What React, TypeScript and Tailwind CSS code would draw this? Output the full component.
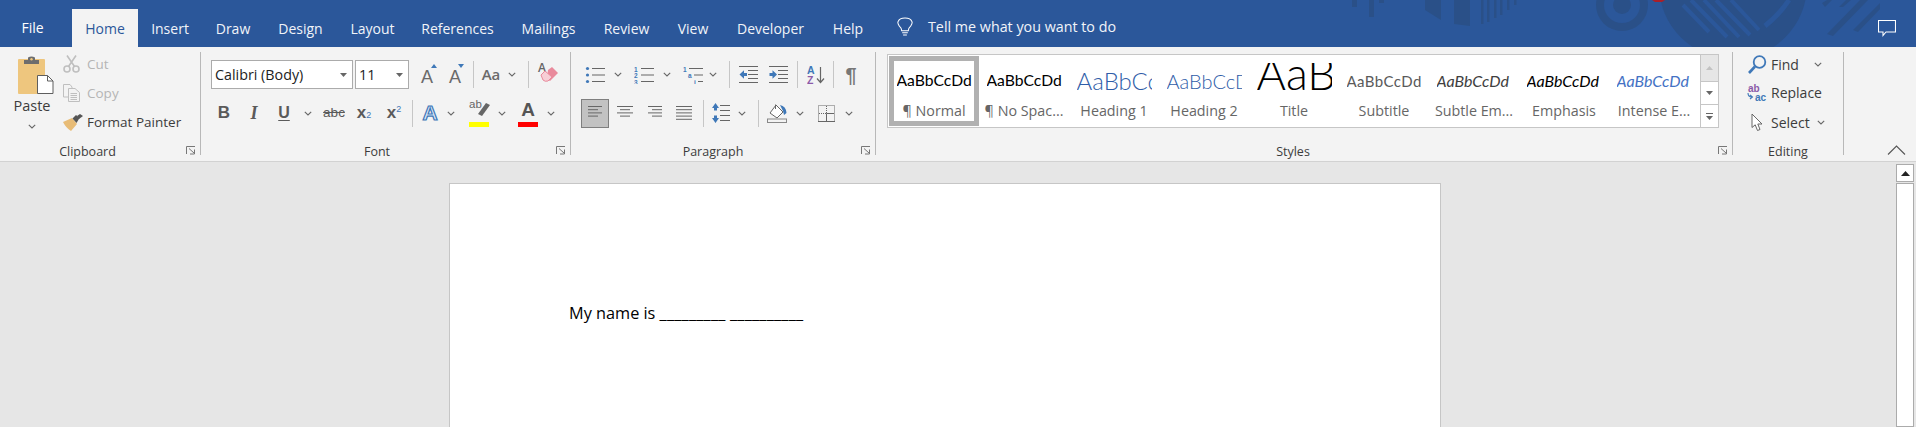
import type { ReactNode } from 'react';

const tabs = [
  { label: 'Insert', w: 'w-[64px]' },
  { label: 'Draw', w: 'w-[62px]' },
  { label: 'Design', w: 'w-[73px]' },
  { label: 'Layout', w: 'w-[71px]' },
  { label: 'References', w: 'w-[99px]' },
  { label: 'Mailings', w: 'w-[83px]' },
  { label: 'Review', w: 'w-[73px]' },
  { label: 'View', w: 'w-[60px]' },
  { label: 'Developer', w: 'w-[95px]' },
  { label: 'Help', w: 'w-[60px]' },
];

const galleryStyles = [
  { label: '¶ Normal', text: 'AaBbCcDd', cls: 'text-[15.7px] text-black', selected: true },
  { label: '¶ No Spac...', text: 'AaBbCcDd', cls: 'text-[15.7px] text-black' },
  { label: 'Heading 1', text: 'AaBbCcDd', cls: 'text-[24px] font-light text-[#2f5da8]' },
  { label: 'Heading 2', text: 'AaBbCcDd', cls: 'text-[20px] font-light text-[#2f5da8]' },
  { label: 'Title', text: 'AaB', cls: 'text-[45px] font-light text-black leading-[36px] -translate-y-[8px]' },
  { label: 'Subtitle', text: 'AaBbCcDd', cls: 'text-[15px] text-[#5a5a5a] tracking-[0.4px]' },
  { label: 'Subtle Em...', text: 'AaBbCcDd', cls: 'text-[16px] italic text-[#404040]' },
  { label: 'Emphasis', text: 'AaBbCcDd', cls: 'text-[16px] italic text-black' },
  { label: 'Intense E...', text: 'AaBbCcDd', cls: 'text-[16px] italic text-[#4472c4]' },
];

function Slot({ className, children }: { className: string; children?: ReactNode }) {
  return <div className={'flex items-center justify-center shrink-0 ' + className}>{children}</div>;
}

function Chev({ className = '' }: { className?: string }) {
  return (
    <Slot className={'w-[8px] ' + className}>
      <svg width="8" height="5" viewBox="0 0 8 5" fill="none" stroke="#666" strokeWidth="1.1">
        <path d="M0.8 0.8 4 4 7.2 0.8" />
      </svg>
    </Slot>
  );
}

function Launcher() {
  return (
    <svg width="10" height="9" viewBox="0 0 10 9" fill="none" stroke="#777" strokeWidth="1" className="absolute right-[4px] top-[2px]">
      <path d="M0.5 8V0.5H9" />
      <path d="M3 2.5 8 7M8.5 3.5V8H4" />
    </svg>
  );
}

function Group({ label, launcher, labelClass = '', className, children }: { label: string; launcher?: boolean; labelClass?: string; className: string; children: ReactNode }) {
  return (
    <div className={'flex flex-col shrink-0 h-[103px] border-r border-[#b8b8b8] ' + className}>
      {children}
      <div className="relative mt-auto -mb-[5px] h-[16px] flex justify-center">
        <span className={'text-[12.5px] leading-[16px] text-[#3c3c3c] ' + labelClass}>{label}</span>
        {launcher && <Launcher />}
      </div>
    </div>
  );
}

function Sep({ className }: { className: string }) {
  return <div className={'w-px h-[27px] bg-[#c6c6c6] shrink-0 ' + className} />;
}

function Lines({ rows }: { rows: [number, number][] }) {
  return (
    <svg width="18" height="16" viewBox="0 0 18 16" stroke="#666" strokeWidth="1">
      {rows.map(([a, b], i) => (
        <line key={i} x1={a} x2={b} y1={1.5 + i * 3.2} y2={1.5 + i * 3.2} />
      ))}
    </svg>
  );
}

function ListIcon({ marks, starts = [7, 7, 7] }: { marks: { t: string; x: number }[]; starts?: number[] }) {
  return (
    <svg width="20" height="18" viewBox="0 0 20 18" fill="#3f78b8" stroke="none">
      {marks.map((m, i) =>
        m.t === '•' ? (
          <circle key={i} cx="2.5" cy={2.5 + i * 6.5} r="1.6" />
        ) : (
          <text key={i} x={m.x} y={6 + i * 6.3} fontSize="6.5" fontWeight="700" fontFamily="Liberation Sans, sans-serif">{m.t}</text>
        ),
      )}
      {starts.map((s, i) => (
        <rect key={i} x={s} y={2 + i * 6.5} width={20 - s} height="1" fill="#666" />
      ))}
    </svg>
  );
}

function IndentIcon({ dir }: { dir: 'in' | 'out' }) {
  return (
    <svg width="19" height="17" viewBox="0 0 19 17">
      <g fill="#666">
        <rect y="0" width="19" height="1" />
        <rect x="9" y="4" width="10" height="1" />
        <rect x="9" y="8" width="10" height="1" />
        <rect x="9" y="12" width="10" height="1" />
        <rect y="16" width="19" height="1" />
      </g>
      {dir === 'out' ? (
        <path d="M0.5 8.5 5 4.2V7H8V10H5V12.8Z" fill="#3f78b8" />
      ) : (
        <path d="M8 8.5 3.5 4.2V7H0.5V10H3.5V12.8Z" fill="#3f78b8" />
      )}
    </svg>
  );
}

function PasteIcon() {
  return (
    <svg width="36" height="38" viewBox="0 0 36 38">
      <rect x="0" y="3" width="27" height="35" fill="#eec67e" rx="1" />
      <path d="M6 8V4H10V1.5Q13.5-.5 17 1.5V4H21V8Z" fill="#6d6d6d" />
      <circle cx="13.5" cy="3.2" r="1.2" fill="#eec67e" />
      <path d="M19.5 19.5H29.5L35 25V37.5H19.5Z" fill="#fff" stroke="#5e5e5e" />
      <path d="M29.5 19.5V25H35" fill="none" stroke="#5e5e5e" />
    </svg>
  );
}

function ScissorsIcon() {
  return (
    <svg width="17" height="18" viewBox="0 0 17 18" fill="none" stroke="#bfbfbf" strokeWidth="1.6">
      <circle cx="4" cy="14" r="3" />
      <circle cx="13" cy="14" r="3" />
      <path d="M5.5 11.5 13 .5M11.5 11.5 4 .5" />
    </svg>
  );
}

function CopyIcon() {
  return (
    <svg width="17" height="18" viewBox="0 0 17 18" fill="#f3f3f3" stroke="#bfbfbf">
      <path d="M.5.5H7L9 3V13H.5Z" />
      <path d="M5.5 4.5H12L16.5 8.5V17.5H5.5Z" />
      <path d="M7.5 9.5H14M7.5 11.5H14M7.5 13.5H14M7.5 15.5H14" />
    </svg>
  );
}

function BrushIcon() {
  return (
    <svg width="20" height="17" viewBox="0 0 20 17">
      <path d="M0 8 9 4 14 10 8 17Q3 14 0 8Z" fill="#e8bc76" />
      <path d="M9.5 4.5 13 1 16.5 4 13.5 9Z" fill="#555" />
      <path d="M14 2 17 0 20 2 16 5Z" fill="#555" />
    </svg>
  );
}

function GrowA({ up }: { up: boolean }) {
  return (
    <div className="relative flex h-[24px] w-[22px] items-end justify-center">
      <span className="text-[18px] leading-[20px] text-[#6a6a6a] font-['Liberation_Sans',sans-serif]">A</span>
      <svg width="6" height="4" viewBox="0 0 6 4" className="absolute right-[1px] top-[1px]" fill="#3f78b8">
        <path d={up ? 'M0 4 3 0 6 4Z' : 'M0 0H6L3 4Z'} />
      </svg>
    </div>
  );
}

function Eraser() {
  return (
    <div className="relative h-[24px] w-[20px]">
      <span className="absolute left-[0px] top-[-2px] text-[12px] font-semibold leading-[14px] text-[#666]">A</span>
      <svg width="20" height="20" viewBox="0 0 20 20" className="absolute left-0 top-[4px]">
        <path d="M10 3 14 0 20 6 12 14 9 12Z" fill="#e98a9c" />
        <path d="M3 8 7 4 14 10 10 14Q7 15 5 13Z" fill="#f7cfd6" stroke="#e98a9c" />
      </svg>
    </div>
  );
}

function Highlighter() {
  return (
    <div className="relative h-[26px] w-[20px]">
      <span className="absolute left-0 top-[-3px] text-[11.5px] leading-[14px] text-[#666]">ab</span>
      <svg width="12" height="15" viewBox="0 0 12 15" className="absolute right-[-1px] top-[2px]" fill="#666">
        <path d="M0 12 8 1 12 3 4 14Z" />
      </svg>
      <div className="absolute bottom-[-1px] left-0 h-[5px] w-[20px] bg-[#ffff00]" />
    </div>
  );
}

function FontColor() {
  return (
    <div className="relative flex h-[26px] w-[20px] justify-center">
      <span className="text-[19px] font-semibold leading-[20px] text-[#555] font-['Liberation_Sans',sans-serif]">A</span>
      <div className="absolute bottom-[-1px] left-0 h-[5px] w-[20px] bg-[#ff0000]" />
    </div>
  );
}

function LineSpacing() {
  return (
    <svg width="18" height="20" viewBox="0 0 18 20">
      <path d="M3.5 0 7 5H5V7.5H2V5H0Z" fill="#3f78b8" />
      <path d="M3.5 20 7 15H5V12.5H2V15H0Z" fill="#3f78b8" />
      <g fill="#666">
        <rect x="8" y="2" width="10" height="1" />
        <rect x="8" y="7" width="10" height="1" />
        <rect x="8" y="12" width="10" height="1" />
        <rect x="8" y="17" width="10" height="1" />
      </g>
    </svg>
  );
}

function Shading() {
  return (
    <svg width="21" height="19" viewBox="0 0 21 19" fill="none">
      <path d="M9 1 16 8 10 14 3 9Z" stroke="#666" fill="#fff" />
      <path d="M8.5 0.5V5" stroke="#666" />
      <path d="M13 1Q19 2 19.5 9L17 11 16 7Z" fill="#3f78b8" />
      <rect x=".5" y="15" width="19" height="3.5" stroke="#888" fill="#f3f3f3" />
    </svg>
  );
}

function Borders() {
  return (
    <svg width="17" height="17" viewBox="0 0 17 17" fill="none" stroke="#666">
      <rect x=".5" y=".5" width="16" height="16" strokeDasharray="1 1" />
      <path d="M8.5 1V16M1 8.5H16" strokeDasharray="1 1" />
      <path d="M0 16.5H17M8.5 8.5V16M8.5 8.500H16" />
    </svg>
  );
}

function SortIcon() {
  return (
    <svg width="18" height="19" viewBox="0 0 18 19" fontFamily="Liberation Sans, sans-serif" fontWeight="700" fontSize="10.5">
      <text x="0" y="9" fill="#3f78b8">A</text>
      <text x="0" y="19" fill="#8b5aa8">Z</text>
      <path d="M13.5 2V17M10 13.5 13.5 17.5 17 13.5" fill="none" stroke="#666" strokeWidth="1.2" />
    </svg>
  );
}

function BoxArrow() {
  return (
    <svg width="7" height="4" viewBox="0 0 7 4" fill="#666">
      <path d="M0 0H7L3.5 4Z" />
    </svg>
  );
}

function Banner() {
  return (
    <svg viewBox="0 0 1916 47" width="1916" height="47" className="absolute left-0 top-0">
      <g fill="#2a5088">
        <rect x="1352" width="5" height="7" />
        <rect x="1369" width="5" height="17" />
        <rect x="1379" width="5" height="3" />
        <path d="M1425 0H1441V20L1425 10Z" />
        <path d="M1454 0H1470V26L1454 24Z" />
        <rect x="1481" width="2.5" height="24" />
        <rect x="1487" width="2.5" height="22" />
        <rect x="1494" width="2.5" height="18" />
        <rect x="1500" width="2.5" height="15" />
        <rect x="1507" width="2.5" height="10" />
        <rect x="1514" width="2.5" height="5" />
        <circle cx="1622" cy="5" r="26" />
        <circle cx="1733" cy="-15" r="74" />
        <path d="M1822 3 1827 0H1832L1825 7ZM1839 7 1846 0H1851L1843 7ZM1827 34 1860 0H1868L1833 36ZM1853 30 1880 3V9L1858 32Z" />
      </g>
      <g fill="#2b579a">
        <circle cx="1622" cy="5" r="18" />
      </g>
      <circle cx="1622" cy="5" r="9" fill="#2a5088" />
      <g stroke="#2b579a" strokeWidth="4" fill="none">
        <path d="M1683 5 1709 32M1691 0 1727 37M1704 0 1739 37M1716 0 1750 35M1731 0 1759 30" />
        <path d="M1765 26Q1780 14 1789 0" strokeWidth="5" />
      </g>
      <path d="M1652 0H1665L1662 2H1655Z" fill="#a8202a" />
    </svg>
  );
}

export default function App() {
  return (
    <div className="flex h-[427px] w-[1916px] flex-col overflow-hidden bg-[#e6e6e6] font-['Open_Sans',sans-serif] text-[13.5px] text-[#3c3c3c]">
      {/* tab strip */}
      <header className="relative h-[47px] shrink-0 bg-[#2b579a] text-[14px]">
        <Banner />
        <div className="relative flex h-full items-end">
          <Slot className="mr-[7px] h-[38px] w-[65px] pb-[2px] text-white">File</Slot>
          <Slot className="h-[38px] w-[66px] bg-[#f3f3f3] text-[#2b579a]">Home</Slot>
          {tabs.map((t) => (
            <Slot key={t.label} className={'h-[38px] text-[#f1f4f9] ' + t.w}>{t.label}</Slot>
          ))}
          <Slot className="ml-[19px] h-[38px] w-[16px] pb-[2px]">
            <svg width="17" height="20" viewBox="0 0 17 20" fill="none" stroke="#fff" strokeWidth="1.1">
              <path d="M5 14Q5 11 2.500 9Q.5 6.500 1 4.500Q2.500.5 8.500.5Q14.500.5 16 4.500Q16.500 6.500 14.500 9Q12 11 12 14Z" />
              <path d="M5.500 16H11.500M6.500 18.500H10.500" />
            </svg>
          </Slot>
          <Slot className="ml-[15px] h-[38px] pb-[2px] text-[14.3px] text-[#f1f4f9]">Tell me what you want to do</Slot>
          <svg width="18" height="17" viewBox="0 0 18 17" fill="none" stroke="#fff" strokeWidth="1.1" className="absolute right-[20px] top-[20px]">
            <path d="M.5.5H17.500V12H8L5 15.500V12H.5Z" />
          </svg>
        </div>
      </header>

      {/* ribbon */}
      <section className="flex h-[115px] shrink-0 items-start border-b border-[#d2d2d2] bg-[#f3f3f3] pt-[5px]">
        <Group label="Clipboard" launcher className="w-[201px]" labelClass="mr-[25px]">
          <div className="flex">
            <div className="ml-[15px] flex w-[34px] flex-col items-center">
              <div className="mt-[4px] h-[38px] w-[36px] shrink-0 translate-x-[4px]"><PasteIcon /></div>
              <div className="mt-[3px] text-[14.5px] leading-[18px]">Paste</div>
              <Chev className="mt-[8px] h-[6px]" />
            </div>
            <div className="ml-[14px] flex flex-col">
              <div className="mt-[3px] flex h-[18px] items-center gap-[6px]"><ScissorsIcon /><span className="ml-[1px] text-[#b5b5b5]">Cut</span></div>
              <div className="mt-[11px] flex h-[18px] items-center gap-[6px]"><CopyIcon /><span className="ml-[1px] text-[#b5b5b5]">Copy</span></div>
              <div className="mt-[11px] flex h-[18px] items-center gap-[4px]"><BrushIcon /><span>Format Painter</span></div>
            </div>
          </div>
        </Group>

        <Group label="Font" launcher className="w-[370px] pl-[9px]" labelClass="mr-[26px]">
          <div className="mt-[8px] ml-[1px] flex h-[29px] items-center">
            <div className="flex h-[29px] w-[142px] shrink-0 items-center justify-between border border-[#ababab] bg-white pl-[3px] pr-[5px] text-[14.3px] text-[#222]">
              Calibri (Body)<BoxArrow />
            </div>
            <div className="ml-[2px] flex h-[29px] w-[54px] shrink-0 items-center justify-between border border-[#ababab] bg-white pl-[3px] pr-[5px] text-[14.3px] text-[#222]">
              11<BoxArrow />
            </div>
            <Slot className="w-[36px]"><GrowA up /></Slot>
            <Slot className="w-[20px]"><GrowA up={false} /></Slot>
            <Sep className="ml-[8px]" />
            <Slot className="w-[34px] text-[15px] font-semibold text-[#6a6a6a]">Aa</Slot>
            <Chev />
            <Sep className="ml-[12px]" />
            <Slot className="w-[38px]"><Eraser /></Slot>
          </div>
          <div className="mt-[9px] flex h-[30px] items-center font-['Liberation_Sans',sans-serif] text-[#5a5a5a]">
            <Slot className="w-[28px] text-[17px] font-bold">B</Slot>
            <Slot className="w-[32px] font-['Liberation_Serif',serif] text-[18px] font-bold italic">I</Slot>
            <Slot className="w-[28px] text-[16px] font-bold underline underline-offset-2">U</Slot>
            <Chev className="ml-[6px]" />
            <Slot className="ml-[5px] w-[34px] text-[13.5px] line-through">abc</Slot>
            <Slot className="w-[26px] text-[17px] font-bold">x<sub className="text-[9px] font-normal text-[#3f78b8]">2</sub></Slot>
            <Slot className="w-[34px] text-[17px] font-bold">x<sup className="text-[9px] font-normal text-[#3f78b8]">2</sup></Slot>
            <Sep className="ml-[1px]" />
            <Slot className="w-[34px] text-[21px] font-bold text-[#dce8f7] [-webkit-text-stroke:1.2px_#3f78b8]">A</Slot>
            <Chev />
            <Slot className="ml-[5px] w-[38px]"><Highlighter /></Slot>
            <Chev />
            <Slot className="ml-[4px] w-[36px]"><FontColor /></Slot>
            <Chev className="ml-[1px]" />
          </div>
        </Group>

        <Group label="Paragraph" launcher className="w-[305px] pl-[10px]" labelClass="mr-[30px]">
          <div className="mt-[8px] flex h-[29px] items-center">
            <Slot className="w-[28px]"><ListIcon marks={[{ t: '•', x: 0 }, { t: '•', x: 0 }, { t: '•', x: 0 }]} /></Slot>
            <Chev className="ml-[5px]" />
            <Slot className="ml-[8px] w-[28px]"><ListIcon marks={[{ t: '1', x: 0 }, { t: '2', x: 0 }, { t: '3', x: 0 }]} /></Slot>
            <Chev className="ml-[5px]" />
            <Slot className="ml-[8px] w-[28px]"><ListIcon marks={[{ t: '1', x: 0 }, { t: 'a', x: 5 }, { t: 'i', x: 11 }]} starts={[6, 11, 15]} /></Slot>
            <Chev className="ml-[2px]" />
            <Sep className="ml-[12px]" />
            <Slot className="ml-[2px] w-[32px]"><IndentIcon dir="out" /></Slot>
            <Slot className="w-[28px]"><IndentIcon dir="in" /></Slot>
            <Sep className="ml-[5px]" />
            <Slot className="w-[35px]"><SortIcon /></Slot>
            <Sep className="" />
            <Slot className="w-[34px] font-['Liberation_Sans',sans-serif] text-[20px] font-bold text-[#777]">¶</Slot>
          </div>
          <div className="mt-[9px] flex h-[30px] items-center">
            <Slot className="h-[29px] w-[28px] border border-[#7f7f7f] bg-[#c2c2c2]"><Lines rows={[[2, 16], [2, 12], [2, 16], [2, 12]]} /></Slot>
            <Slot className="ml-[2px] w-[28px]"><Lines rows={[[1, 17], [4, 14], [1, 17], [4, 14]]} /></Slot>
            <Slot className="ml-[2px] w-[28px]"><Lines rows={[[2, 16], [6, 16], [2, 16], [6, 16]]} /></Slot>
            <Slot className="ml-[2px] w-[28px]"><Lines rows={[[0, 16], [0, 16], [0, 16], [0, 16], [0, 16]]} /></Slot>
            <Sep className="ml-[4px]" />
            <Slot className="w-[34px]"><LineSpacing /></Slot>
            <Chev />
            <Sep className="ml-[12px]" />
            <Slot className="w-[36px]"><Shading /></Slot>
            <Chev className="ml-[1px]" />
            <Slot className="ml-[6px] w-[32px]"><Borders /></Slot>
            <Chev className="ml-[3px]" />
          </div>
        </Group>

        <Group label="Styles" launcher className="w-[857px] pl-[11px]" labelClass="mr-[33px]">
          <div className="mt-[2px] flex h-[74px] w-[832px] border border-[#c6c6c6] bg-white pl-px">
            {galleryStyles.map((s) => (
              <div key={s.label} className={'mt-px flex h-[70px] w-[90px] shrink-0 flex-col items-center border-[5px] ' + (s.selected ? 'border-[#b1b1b1]' : 'border-transparent')}>
                <div className="mt-[2px] flex h-[36px] w-[75px] items-center overflow-hidden whitespace-nowrap font-['Lato',sans-serif]">
                  <span className={s.cls}>{s.text}</span>
                </div>
                <div className="mt-[3px] whitespace-nowrap text-[14.3px] leading-[18px] text-[#666]">{s.label}</div>
              </div>
            ))}
            <div className="ml-px flex w-[18px] shrink-0 flex-col border-l border-[#c6c6c6]">
              <Slot className="h-[26px] bg-[#e6e6e6]">
                <svg width="7" height="4" viewBox="0 0 7 4" fill="#c2c2c2"><path d="M0 4H7L3.5 0Z" /></svg>
              </Slot>
              <Slot className="h-[24px] border-y border-[#c6c6c6]"><BoxArrow /></Slot>
              <Slot className="flex-1 flex-col gap-[2px]">
                <div className="h-px w-[7px] bg-[#666]" />
                <BoxArrow />
              </Slot>
            </div>
          </div>
        </Group>

        <Group label="Editing" className="w-[111px]" labelClass="">
          <div className="ml-[14px] flex flex-col text-[14px]">
            <div className="mt-[2px] flex h-[20px] items-center">
              <Slot className="w-[20px]">
                <svg width="19" height="19" viewBox="0 0 19 19" fill="none" stroke="#3f78b8" strokeWidth="1.8">
                  <circle cx="11.500" cy="7" r="5.800" />
                  <path d="M7 11.500 1 18" strokeWidth="2.600" />
                </svg>
              </Slot>
              <span className="ml-[4px]">Find</span>
              <Chev className="ml-[15px]" />
            </div>
            <div className="mt-[8px] flex h-[20px] items-center">
              <Slot className="w-[20px]">
                <svg width="20" height="18" viewBox="0 0 20 18" fontFamily="Liberation Sans, sans-serif" fontWeight="700" fontSize="10">
                  <text x="1" y="8.500" fill="#8b5aa8">ab</text>
                  <text x="8" y="17.500" fill="#3f78b8">ac</text>
                  <path d="M1 10Q1 14 5 14M3 11.800 5.500 14 3 16" fill="none" stroke="#3f78b8" strokeWidth="1.100" />
                </svg>
              </Slot>
              <span className="ml-[4px]">Replace</span>
            </div>
            <div className="mt-[10px] flex h-[20px] items-center">
              <Slot className="w-[20px]">
                <svg width="12" height="19" viewBox="0 0 12 19" fill="#fff" stroke="#666">
                  <path d="M1 1V14.500L4.200 11.800 6.500 17.500 9 16.500 6.800 11H11Z" />
                </svg>
              </Slot>
              <span className="ml-[4px]">Select</span>
              <Chev className="ml-[7px]" />
            </div>
          </div>
        </Group>

        <div className="flex h-[103px] flex-1 items-end justify-end pr-[10px]">
          <svg width="19" height="10" viewBox="0 0 19 10" fill="none" stroke="#555" strokeWidth="1.100">
            <path d="M1 9.500 9.500 1 18 9.500" />
          </svg>
        </div>
      </section>

      {/* document */}
      <main className="flex min-h-0 flex-1 justify-between overflow-hidden">
        <div className="ml-[449px] mt-[21px] h-[300px] w-[992px] shrink-0 whitespace-pre border border-[#c6c6c6] bg-white pl-[119px] pt-[119px] text-[16.3px] leading-[20px] text-black">
          My name is <span className="tracking-[0.2px]">_________ __________</span>
        </div>
        <div className="mr-[2px] mt-[2px] flex w-[18px] shrink-0 flex-col gap-px">
          <Slot className="h-[18px] border border-[#ababab] bg-white">
            <svg width="9" height="5" viewBox="0 0 9 5" fill="#222"><path d="M0 5H9L4.500 0Z" /></svg>
          </Slot>
          <div className="flex-1 border border-[#ababab] bg-white" />
        </div>
      </main>
    </div>
  );
}
